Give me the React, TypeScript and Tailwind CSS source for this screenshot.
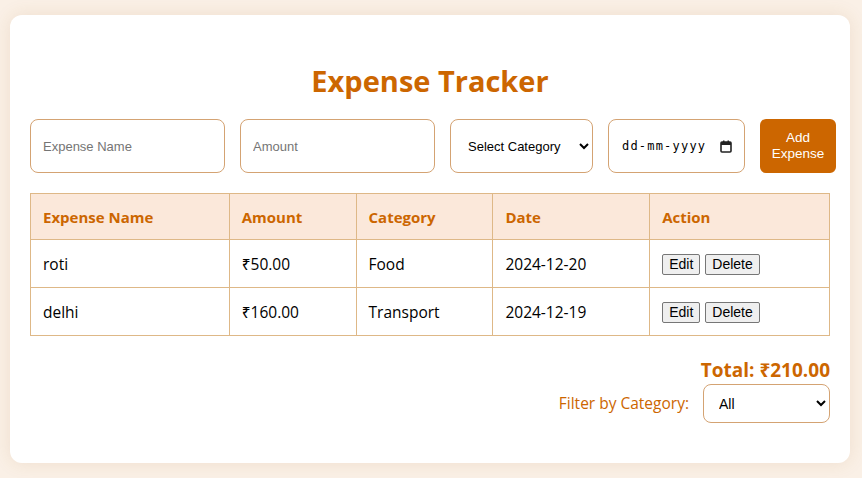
import React from "react";

const rows = [
  { name: "roti", amount: "₹50.00", category: "Food", date: "2024-12-20" },
  { name: "delhi", amount: "₹160.00", category: "Transport", date: "2024-12-19" },
];

const seg = { fontFamily: '"Open Sans", "Noto Sans", sans-serif' } as React.CSSProperties;
const arial = { fontFamily: '"Liberation Sans", Arial, sans-serif' } as React.CSSProperties;

function SmallBtn({ children }: { children: React.ReactNode }) {
  return (
    <button
      style={arial}
      className="h-[21px] px-[6px] text-[14px] leading-[17px] text-black bg-[#efefef] border border-[#767676] rounded-[2px]"
    >
      {children}
    </button>
  );
}

export default function App() {
  return (
    <div className="min-h-[478px] w-full bg-[#faf0e6] pt-[15px] px-[10px] pb-[16px]" style={seg}>
      <div className="w-[840px] bg-white rounded-[12px] shadow-[0_0_18px_rgba(160,110,40,0.13)] px-5 pt-5 pb-10">
        <h1 className="text-center text-[29px] font-bold text-[#cc6600] leading-[43px] mt-[24px] mb-[17px]">
          Expense Tracker
        </h1>

        <div className="flex gap-[15px] h-[54px] w-[806px]">
          <input
            style={arial}
            placeholder="Expense Name"
            className="w-[195px] h-full border border-[#d4a373] rounded-[8px] px-3 text-[13px] text-black placeholder:text-[#757575] outline-none"
          />
          <input
            style={arial}
            placeholder="Amount"
            className="w-[195px] h-full border border-[#d4a373] rounded-[8px] px-3 text-[13px] text-black placeholder:text-[#757575] outline-none"
          />
          <select
            style={arial}
            defaultValue=""
            className="w-[143px] h-full border border-[#d4a373] rounded-[8px] pl-[13px] pr-[6px] text-[13px] text-black bg-white outline-none"
          >
            <option value="">Select Category</option>
            <option>Food</option>
            <option>Transport</option>
          </select>
          <div className="w-[137px] h-full border border-[#d4a373] rounded-[8px] pl-[13px] pr-[12px] flex items-center justify-between bg-white">
            <span
              className="text-black tracking-[1.2px]"
              style={{ fontFamily: '"DejaVu Sans Mono", "Liberation Mono", monospace', fontSize: "12px" }}
            >
              dd-mm-yyyy
            </span>
            <svg width="12" height="13" viewBox="0 0 12 13" className="shrink-0">
              <rect x="1" y="2" width="10" height="10" rx="1" fill="none" stroke="#222" strokeWidth="1.6" />
              <rect x="1" y="2" width="10" height="3" fill="#222" />
              <rect x="3" y="0.5" width="1.5" height="2.5" fill="#222" />
              <rect x="7.5" y="0.5" width="1.5" height="2.5" fill="#222" />
            </svg>
          </div>
          <button
            style={arial}
            className="w-[76px] h-full bg-[#cc6600] text-white text-[13.5px] leading-[16px] rounded-[6px] px-1"
          >
            Add Expense
          </button>
        </div>

        <table className="w-[800px] mt-5 border-collapse border border-[#deb887]">
          <thead>
            <tr className="bg-[#fbe8da]">
              {[
                ["Expense Name", "w-[199px]"],
                ["Amount", "w-[127px]"],
                ["Category", "w-[137px]"],
                ["Date", "w-[157px]"],
                ["Action", "w-[180px]"],
              ].map(([h, w]) => (
                <th
                  key={h}
                  className={`${w} text-left px-3 pt-[13px] pb-[11px] border border-[#deb887] text-[15px] leading-[21px] font-bold text-[#cc6600]`}
                >
                  {h}
                </th>
              ))}
            </tr>
          </thead>
          <tbody>
            {rows.map((r) => (
              <tr key={r.name}>
                <td className="px-3 pt-[13px] pb-[11px] border border-[#deb887] text-[15.5px] leading-[23px] text-black">{r.name}</td>
                <td className="px-3 pt-[13px] pb-[11px] border border-[#deb887] text-[15.5px] leading-[23px] text-black">{r.amount}</td>
                <td className="px-3 pt-[13px] pb-[11px] border border-[#deb887] text-[15.5px] leading-[23px] text-black">{r.category}</td>
                <td className="px-3 pt-[13px] pb-[11px] border border-[#deb887] text-[15.5px] leading-[23px] text-black">{r.date}</td>
                <td className="px-3 pt-[13px] pb-[11px] border border-[#deb887] text-[15.5px] leading-[23px] text-black">
                  <div className="flex items-center gap-[5px]">
                    <SmallBtn>Edit</SmallBtn>
                    <SmallBtn>Delete</SmallBtn>
                  </div>
                </td>
              </tr>
            ))}
          </tbody>
        </table>

        <div className="mt-[21px] text-right text-[19px] font-bold leading-[27px] text-[#cc6600]">
          Total: ₹210.00
        </div>
        <div className="flex justify-end items-center gap-[14px] h-[39px]">
          <span className="text-[15.5px] text-[#cc6600]">Filter by Category:</span>
          <select
            style={arial}
            defaultValue="All"
            className="w-[127px] h-[39px] border border-[#d4a373] rounded-[8px] pl-[11px] pr-[4px] text-[14px] text-black bg-white outline-none"
          >
            <option>All</option>
            <option>Food</option>
            <option>Transport</option>
          </select>
        </div>
      </div>
    </div>
  );
}
